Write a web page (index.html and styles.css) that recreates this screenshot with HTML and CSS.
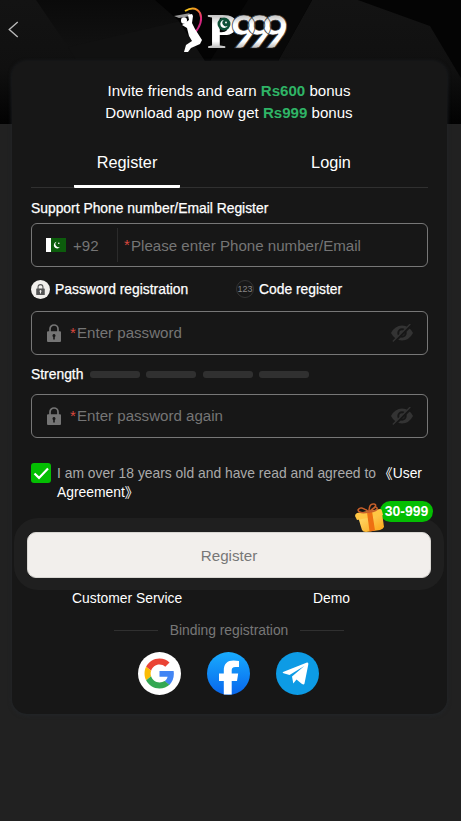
FILE: index.html
```html
<!DOCTYPE html>
<html lang="en">
<head>
<meta charset="utf-8">
<meta name="viewport" content="width=device-width, initial-scale=1">
<title>Register</title>
<link rel="stylesheet" href="styles.css">
</head>
<body>
<svg class="symbols" width="0" height="0">
  <symbol id="lock" viewBox="0 0 14 18">
    <path d="M3 8V5a4 4 0 0 1 8 0v3" fill="none" stroke="currentColor" stroke-width="1.7"/>
    <path fill="currentColor" fill-rule="evenodd" d="M1 7.3h12a1 1 0 0 1 1 1V17a1 1 0 0 1-1 1H1a1 1 0 0 1-1-1V8.300a1 1 0 0 1 1-1zM7 10a1.700 1.700 0 0 0-.8 3.100V15.500h1.600v-2.400A1.700 1.700 0 0 0 7 10z"/>
  </symbol>
  <symbol id="eye-off" viewBox="0 0 22 18">
    <path fill="currentColor" fill-rule="evenodd" d="M0 9Q4 1.500 11 1.500T22 9Q18 16.500 11 16.500T0 9zM11 4.300a4.700 4.700 0 1 0 0 9.400a4.700 4.700 0 0 0 0-9.400z"/>
    <circle cx="11" cy="9" r="2.700" fill="currentColor"/>
    <path d="M2.700 18.500L20.500.8" stroke="#171717" stroke-width="2.600"/>
    <path d="M1.800 17.500L19.300 0" stroke="currentColor" stroke-width="1.400"/>
  </symbol>
</svg>

<header class="hero">
  <svg class="hero-bg" viewBox="0 0 461 124" preserveAspectRatio="none">
    <defs>
      <linearGradient id="shade" x1="0" y1="0" x2="0" y2="1"><stop offset="0" stop-color="#131313"/><stop offset=".55" stop-color="#101010"/><stop offset="1" stop-color="#020202"/></linearGradient>
      <linearGradient id="facet" x1="0" y1="0" x2="0" y2="1"><stop offset="0" stop-color="#0a0a0a"/><stop offset="1" stop-color="#111"/></linearGradient>
    </defs>
    <rect width="461" height="124" fill="url(#shade)"/>
    <path d="M36 0H157L185 22 68 47z" fill="url(#facet)"/>
    <path d="M68 47L185 20 290 60H76z" fill="#111"/>
    <path d="M155 0H312L278 61H205L178 20z" fill="#030303"/>
    <path d="M248 0H312L278 61H210z" fill="#080808"/>
    <path d="M358 0H461V78L430 26z" fill="#040404"/>
  </svg>
  <svg class="back" viewBox="0 0 10 16"><path d="M9 1L1 8l8 7" fill="none" stroke="#b9b9b9" stroke-width="1.300"/></svg>
  <svg class="logo" viewBox="0 -6 124 61">
    <defs>
      <linearGradient id="ring" x1="0" y1="0" x2="1" y2="1"><stop offset="0" stop-color="#f6d31d"/><stop offset=".4" stop-color="#f18a22"/><stop offset=".7" stop-color="#df267b"/><stop offset="1" stop-color="#a32891"/></linearGradient>
      <linearGradient id="steel" gradientUnits="userSpaceOnUse" x1="0" y1="8" x2="0" y2="42"><stop offset="0" stop-color="#bbb"/><stop offset=".3" stop-color="#fff"/><stop offset=".8" stop-color="#fff"/><stop offset="1" stop-color="#bbb"/></linearGradient>
    </defs>
    <path d="M11 5Q21-1 26 7Q30 16 20 28" fill="none" stroke="url(#ring)" stroke-width="2"/>
    <path d="M0 10L15 7.200 18 9.800 5 12z" fill="#999"/>
    <g fill="#fff">
      <ellipse cx="10" cy="14.500" rx="3" ry="3.300"/>
      <path d="M14 9L18 8 19 10 18 17 21 23 28 34 26 38 17 42 14 46 10 46 12 39 18 35 15 30 13 22 8 19 11 17 15 14z"/>
    </g>
    <text x="33" y="42" fill="url(#steel)"><tspan class="logo-p">P</tspan><tspan class="logo-digits">999</tspan></text>
    <circle cx="50" cy="18" r="6.500" fill="#0e5037"/>
    <path d="M50 14a4 4 0 1 0 3.800 5.800a3.300 3.300 0 1 1-3.800-5.800z" fill="#fff"/>
    <circle cx="52" cy="16.500" r=".9" fill="#fff"/>
  </svg>
</header>

<main class="card">
  <p class="promo">Invite friends and earn <b>Rs600</b> bonus<br>Download app now get <b>Rs999</b> bonus</p>

  <nav class="tabs">
    <a class="tab tab-active">Register</a>
    <a class="tab tab-login">Login</a>
  </nav>

  <h2 class="label">Support Phone number/Email Register</h2>
  <div class="field">
    <span class="country">
      <svg class="flag" viewBox="0 0 20 14"><path fill="#fff" d="M0 0h5v14H0z"/><path fill="#0c5c0c" d="M5 0h15v14H5z"/><path d="M10.800 3.800a3.300 3.300 0 1 0 3.200 4.900a2.900 2.900 0 1 1-3.200-4.900z" fill="#fff"/><circle cx="12.800" cy="5.300" r=".8" fill="#fff"/></svg>
      <span class="hint-low">+92</span>
    </span>
    <i class="star">*</i><span class="hint-low">Please enter Phone number/Email</span>
  </div>

  <div class="modes">
    <span class="mode"><i class="mode-icon mode-on"><svg class="mini-lock"><use href="#lock"/></svg></i>Password registration</span>
    <span class="mode"><i class="mode-icon mode-off">123</i>Code register</span>
  </div>

  <div class="field">
    <svg class="lock"><use href="#lock"/></svg><i class="star">*</i><span class="hint">Enter password</span>
    <svg class="eye"><use href="#eye-off"/></svg>
  </div>
  <div class="strength"><span class="strength-label">Strength</span><i></i><i></i><i></i><i></i></div>
  <div class="field">
    <svg class="lock"><use href="#lock"/></svg><i class="star">*</i><span class="hint">Enter password again</span>
    <svg class="eye"><use href="#eye-off"/></svg>
  </div>

  <div class="terms">
    <svg class="check" viewBox="0 0 20 20"><rect width="20" height="20" rx="3" fill="#04be02"/><path d="M3.500 10.500l4.500 4.400 9-9.300" fill="none" stroke="#fff" stroke-width="2.200"/></svg>
    <p class="terms-text">I am over 18 years old and have read and agreed to <span class="agreement"><span class="open">《</span>User<br>Agreement<span>》</span></span></p>
  </div>

  <div class="submit">
    <button class="submit-button">Register</button>
    <div class="bonus">
      <b class="bonus-label">30-999</b>
      <svg class="gift" viewBox="0 0 30 31">
        <defs><linearGradient id="gold" x1="0" y1="0" x2="1" y2="1"><stop offset="0" stop-color="#ffe176"/><stop offset="1" stop-color="#fca313"/></linearGradient></defs>
        <path d="M3 15L27 11 29 25Q28 27 25 28L11 30Q8 30 7 28z" fill="url(#gold)"/>
        <path d="M0 14Q0 12 2 11L25 7Q27 7 27 9L28 13 2 18z" fill="#ffc644"/>
        <path d="M12 10L17 9 20 28.500 14.500 29.500z" fill="#ee7012"/>
        <path d="M14 10Q4 12 3 8Q5 3 14 10Q14 1 19 2T14 10Q21 3 22 6T14 10" fill="none" stroke="#c8602a" stroke-width="1.500"/>
      </svg>
    </div>
  </div>

  <div class="links"><a>Customer Service</a><a>Demo</a></div>
  <div class="divider"><span>Binding registration</span></div>
  <div class="socials">
    <svg class="social" viewBox="0 0 43 43">
      <circle cx="21.500" cy="21.500" r="21.500" fill="#fff"/>
      <g transform="translate(6.500 6.500) scale(.625)">
        <path fill="#ea4335" d="M24 9.500c3.540 0 6.710 1.220 9.210 3.600l6.850-6.850C35.900 2.380 30.470 0 24 0 14.620 0 6.510 5.380 2.560 13.220l7.980 6.190C12.430 13.720 17.740 9.500 24 9.500z"/>
        <path fill="#4285f4" d="M46.980 24.550c0-1.570-.15-3.090-.38-4.550H24v9.020h12.940c-.58 2.960-2.260 5.480-4.780 7.180l7.730 6c4.510-4.180 7.090-10.360 7.090-17.650z"/>
        <path fill="#fbbc05" d="M10.530 28.590c-.48-1.450-.76-2.990-.76-4.590s.27-3.140.76-4.590l-7.980-6.190C.92 16.460 0 20.120 0 24s.92 7.540 2.560 10.780z"/>
        <path fill="#34a853" d="M24 48c6.480 0 11.930-2.130 15.890-5.810l-7.730-6c-2.150 1.450-4.920 2.300-8.160 2.300-6.260 0-11.570-4.220-13.470-9.910l-7.980 6.190C6.510 42.620 14.620 48 24 48z"/>
      </g>
    </svg>
    <svg class="social" viewBox="0 0 43 43">
      <defs><linearGradient id="fb" x1="0" y1="0" x2="0" y2="1"><stop offset="0" stop-color="#18acfe"/><stop offset="1" stop-color="#0866ed"/></linearGradient></defs>
      <circle cx="21.500" cy="21.500" r="21.500" fill="url(#fb)"/>
      <path fill="#fff" d="M16.800 42.500V29H12v-7.500h4.800v-3C16.800 11.500 20.500 8.400 26.500 8.400c2 0 3.700.2 5.500.5v6h-3.500c-3 0-3.800 1.400-3.800 3.600v3h6.500L30 29h-5.300v13.500z"/>
    </svg>
    <svg class="social" viewBox="0 0 43 43">
      <circle cx="21.500" cy="21.500" r="21.500" fill="#0d9be5"/>
      <path fill="#fff" d="M7 20L31 10.600Q32.700 10.300 32.300 12.500L28.500 31.500Q28 33.200 26 32L20.500 27.500 17.300 31.500 16 24.500 28.300 14 13.500 23 7.500 21.200Q6 20.500 7 20z"/>
    </svg>
  </div>
</main>
</body>
</html>
```
FILE: styles.css
```css
* { box-sizing: border-box; }
body {
  margin: 0;
  min-height: 821px;
  background: #212121;
  color: #fff;
  font: 13.86px/20px "Liberation Sans", "Noto Sans CJK SC", sans-serif;
}
svg { display: block; flex: none; }
i { font-style: normal; }
p, h2 { margin: 0; }
.symbols { position: absolute; }

.hero { position: relative; height: 61px; }
.hero-bg { position: absolute; top: 0; left: 0; width: 100%; height: 124px; }
.back { position: absolute; left: 8px; top: 21px; width: 11px; height: 17px; }
.logo { position: absolute; left: 174px; top: 0; width: 124px; height: 61px; }
.logo-p { font: bold 50px "Liberation Serif", serif; letter-spacing: -7px; }
.logo-digits { font: 900 46px Lato, sans-serif; letter-spacing: -11px; stroke: #333; stroke-width: .7px; }

.card {
  position: relative;
  width: 435px;
  height: 653px;
  margin-left: 12px;
  padding: 19px 19px 0;
  background: #171717;
  border-radius: 15px;
  box-shadow: 0 1px 4px #22262a;
}
.promo { height: 44px; padding-right: 1px; font-size: 15.080px; line-height: 22px; text-align: center; }
.promo b { color: #2fb466; }

.tabs { display: flex; height: 64px; padding-left: 43px; border-bottom: 1px solid #303030; }
.tab { width: 106px; height: 64px; padding-top: 28px; font-size: 16.300px; text-align: center; }
.tab-active { border-bottom: 3px solid #fff; border-radius: 1px; }
.tab-login { margin-left: 98px; }

.label { height: 35px; padding-top: 10px; font-size: 13.860px; font-weight: 400; -webkit-text-stroke: .25px #fff; }
.field {
  display: flex;
  align-items: center;
  height: 44px;
  padding-left: 15px;
  border: 1px solid #777;
  border-radius: 6px;
  font-size: 15.100px;
  color: #757575;
}
.country { display: flex; align-items: center; gap: 7px; width: 71px; height: 34px; margin-right: 6px; border-right: 1px solid #2b2b2b; }
.flag { width: 20px; height: 14px; margin-left: -1px; }
.star { width: 7px; color: #d9483e; font-size: 15px; }
.hint-low { padding-top: 1px; }
.hint { padding-bottom: 1px; }
.lock { width: 14px; height: 18px; margin-right: 9px; }
.eye { width: 22px; height: 18px; margin: 0 14px 0 auto; color: #333; }

.modes { display: grid; grid-template-columns: 205px 1fr; align-items: center; height: 44px; }
.mode { display: flex; align-items: center; gap: 5px; -webkit-text-stroke: .25px #fff; }
.mode-icon { display: flex; align-items: center; justify-content: center; width: 19px; height: 19px; border-radius: 50%; -webkit-text-stroke: 0; }
.mode-on { background: #f1efec; color: #555; }
.mode-off { width: 18px; height: 18px; border: 1px solid #333; color: #858585; font-size: 9px; }
.mini-lock { width: 9px; height: 11px; }
.mini-lock use { transform: scale(1); }

.strength { display: flex; align-items: center; height: 39px; gap: 6.300px; }
.strength-label { width: 52.700px; padding-bottom: 1px; -webkit-text-stroke: .25px #fff; }
.strength i { width: 50px; height: 7px; border-radius: 3px; background: #303030; }

.terms { display: flex; gap: 6px; height: 80px; padding-top: 25px; }
.check { width: 20px; height: 20px; }
.terms-text { padding-top: 1px; line-height: 19px; color: #aaa; white-space: nowrap; }
.agreement { color: #fff; }
.open { margin-left: -1px; }

.submit {
  position: relative;
  height: 72px;
  margin: 0 -16px 0 -17px;
  padding: 14px 13px;
  border-radius: 24px;
  background: #1f1f1f;
}
.submit-button { display: block; width: 404px; height: 46px; padding: 0; border: 1px solid #d8d6d2; border-radius: 9px; background: #f2efec; color: #777; font: 15.200px "Liberation Sans", sans-serif; }
.bonus { position: absolute; top: -17px; right: 11px; width: 80px; height: 31px; }
.gift { position: absolute; left: 2px; top: 1px; width: 30px; height: 31px; }
.bonus-label { position: absolute; left: 27px; top: 0; width: 53px; height: 21px; border-radius: 11px; background: #04be02; font-size: 14px; line-height: 20px; text-align: center; }

.links { display: flex; justify-content: space-between; height: 16px; padding: 0 78px 0 41px; line-height: 16px; }
.divider { display: flex; align-items: center; justify-content: center; gap: 12px; height: 46px; padding-top: 2px; margin-left: -1px; color: #777; }
.divider::before, .divider::after { content: ""; width: 44px; height: 1px; background: #303030; }
.socials { display: flex; justify-content: center; gap: 26px; margin-left: -2px; }
.social { width: 43px; height: 43px; }
```
